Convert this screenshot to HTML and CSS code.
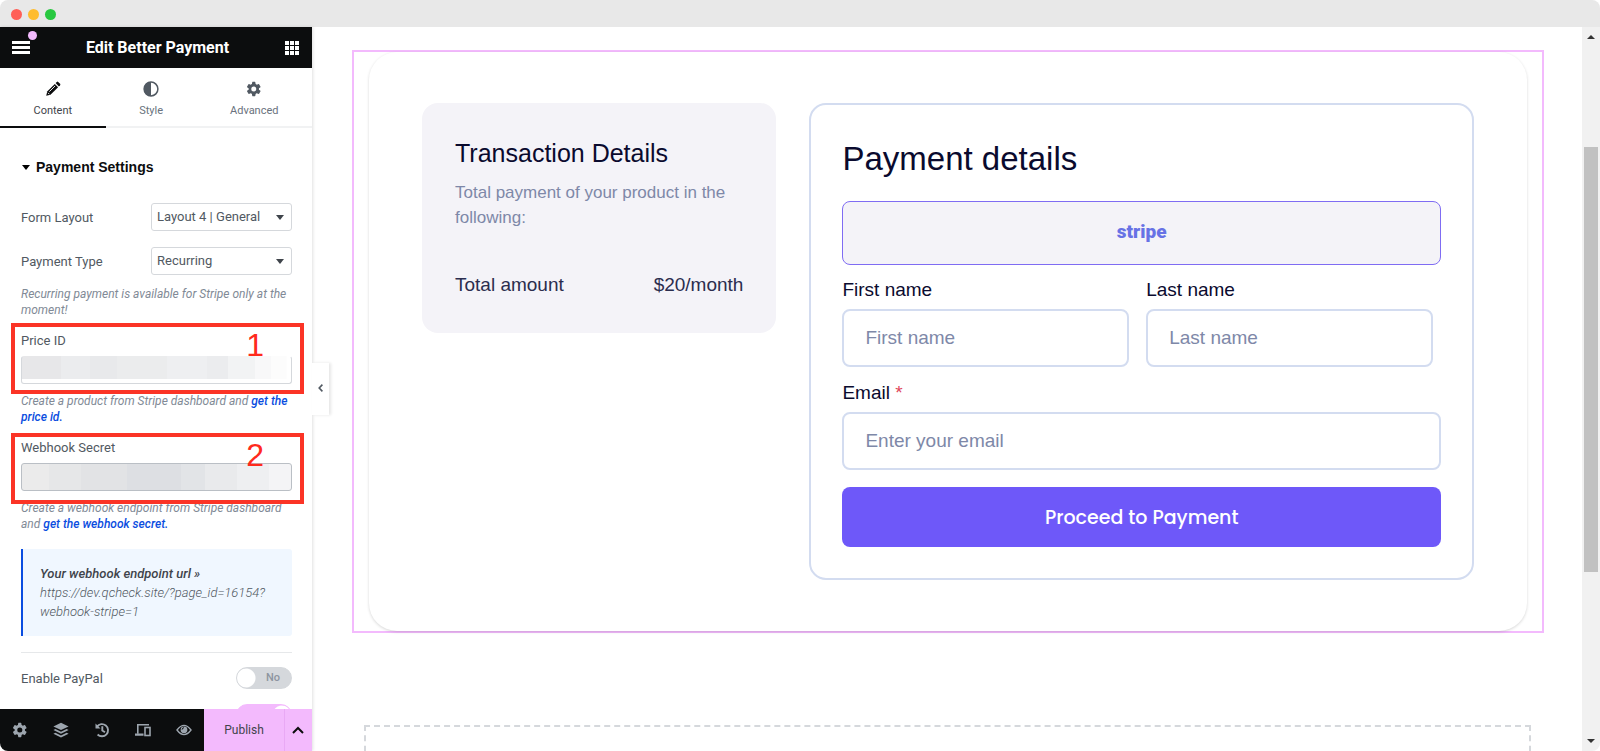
FILE: index.html
```html
<!DOCTYPE html>
<html lang="en">
<head>
    <meta charset="UTF-8">
    <meta name="viewport" content="width=device-width, initial-scale=1.0">
    <title>Edit Better Payment</title>
    <link rel="stylesheet" href="styles.css">
</head>
<body>
    <div class="window">
        <div class="titlebar">
            <span class="dot dot-red"></span>
            <span class="dot dot-yellow"></span>
            <span class="dot dot-green"></span>
        </div>

        <div class="workspace">
            <aside class="sidebar">
                <header class="panel-header">
                    <button class="icon-btn menu-btn" aria-label="Menu">
                        <svg width="18" height="13" viewBox="0 0 18 13" fill="#fff"><path d="M0 0h18v3H0zM0 5h18v3H0zM0 10h18v3H0z"/></svg>
                        <span class="notice-dot"></span>
                    </button>
                    <h1 class="panel-title">Edit Better Payment</h1>
                    <button class="icon-btn" aria-label="Widgets">
                        <svg width="14" height="14" viewBox="0 0 14 14" fill="#fff"><path d="M0 0h4v4H0zM5 0h4v4H5zM10 0h4v4h-4zM0 5h4v4H0zM5 5h4v4H5zM10 5h4v4h-4zM0 10h4v4H0zM5 10h4v4H5zM10 10h4v4h-4z"/></svg>
                    </button>
                </header>

                <nav class="tabs">
                    <button class="tab active">
                        <svg width="16" height="16" viewBox="0 0 16 16"><path d="M1.2 14.8l1-4.3 7.6-7.6 3.3 3.3-7.6 7.6z" fill="#0c0d0e"/><path d="M10.6 2.1l1.2-1.2q.7-.6 1.4 0l1.9 1.9q.6.7 0 1.4l-1.2 1.2z" fill="#0c0d0e"/><path d="M4.3 10.7l5.8-5.8M3 11.8l1.3 1.4" stroke="#fff" stroke-width=".9"/></svg>
                        Content
                    </button>
                    <button class="tab">
                        <svg width="16" height="16" viewBox="0 0 16 16"><circle cx="8" cy="8" r="6.9" fill="#fff" stroke="#515962" stroke-width="1.5"/><path d="M8 1a7 7 0 0 0 0 14z" fill="#515962"/></svg>
                        Style
                    </button>
                    <button class="tab">
                        <svg width="16" height="16" viewBox="0 0 24 24"><path fill="#515962" d="M19.4 13a7.5 7.5 0 0 0 0-2l2.3-1.800a.6.6 0 0 0 .1-.7l-2.2-3.8a.6.6 0 0 0-.7-.2l-2.7 1.1a8 8 0 0 0-1.8-1L14 1.700a.6.6 0 0 0-.6-.5H9.800a.6.6 0 0 0-.5.5l-.4 2.9a8 8 0 0 0-1.8 1L4.400 4.500a.6.6 0 0 0-.7.2L1.500 8.500a.6.6 0 0 0 .1.7L4 11a7.500 7.500 0 0 0 0 2l-2.400 1.800a.6.6 0 0 0-.1.7l2.200 3.800c.1.2.4.3.7.2l2.700-1.100a8 8 0 0 0 1.800 1l.4 2.900c0 .3.3.5.5.5h3.600c.3 0 .5-.2.6-.5l.4-2.900a8 8 0 0 0 1.800-1l2.700 1.100c.3.1.6 0 .7-.2l2.200-3.800a.6.6 0 0 0-.1-.7zM11.700 15.800a3.800 3.800 0 1 1 0-7.600 3.800 3.800 0 0 1 0 7.600z"/></svg>
                        Advanced
                    </button>
                </nav>

                <div class="controls">
                    <h2 class="section-title">
                        <svg width="8" height="5" viewBox="0 0 8 5"><path d="M0 0h8L4 5z"/></svg>
                        Payment Settings
                    </h2>

                    <div class="control-row">
                        <label for="form-layout">Form Layout</label>
                        <div class="select-wrap">
                            <select id="form-layout" class="select">
                                <option>Layout 4 | General</option>
                            </select>
                            <svg class="select-arrow" width="8" height="5" viewBox="0 0 8 5" fill="#3f444b"><path d="M0 0h8L4 5z"/></svg>
                        </div>
                    </div>
                    <div class="control-row">
                        <label for="payment-type">Payment Type</label>
                        <div class="select-wrap">
                            <select id="payment-type" class="select">
                                <option>Recurring</option>
                            </select>
                            <svg class="select-arrow" width="8" height="5" viewBox="0 0 8 5" fill="#3f444b"><path d="M0 0h8L4 5z"/></svg>
                        </div>
                    </div>
                    <p class="description type-note">Recurring payment is available for Stripe only at the moment!</p>

                    <div class="field">
                        <label for="price-id">Price ID</label>
                        <input type="text" id="price-id" class="masked masked-price">
                        <p class="description">Create a product from Stripe dashboard and <a href="#">get the price id.</a></p>
                        <div class="callout callout-price">1</div>
                    </div>

                    <div class="field">
                        <label for="webhook-secret">Webhook Secret</label>
                        <input type="text" id="webhook-secret" class="masked masked-secret">
                        <p class="description">Create a webhook endpoint from Stripe dashboard and <a href="#">get the webhook secret.</a></p>
                        <div class="callout callout-secret">2</div>
                    </div>

                    <div class="endpoint">
                        <strong>Your webhook endpoint url »</strong><br>
                        https://dev.qcheck.site/?page_id=16154?<wbr>webhook-stripe=1
                    </div>

                    <div class="switches">
                        <div class="control-row">
                            <label for="enable-paypal">Enable PayPal</label>
                            <span class="switch">
                                <input type="checkbox" id="enable-paypal">
                                <span class="switch-text">No</span>
                            </span>
                        </div>
                        <div class="control-row">
                            <label for="enable-stripe">Enable Stripe</label>
                            <span class="switch">
                                <input type="checkbox" id="enable-stripe" checked>
                            </span>
                        </div>
                    </div>
                </div>

                <footer class="panel-footer">
                    <button class="tool" aria-label="Settings">
                        <svg width="16" height="16" viewBox="0 0 24 24"><path fill="#9da5ae" d="M19.4 13a7.5 7.5 0 0 0 0-2l2.3-1.800a.6.6 0 0 0 .1-.7l-2.2-3.8a.6.6 0 0 0-.7-.2l-2.7 1.1a8 8 0 0 0-1.8-1L14 1.700a.6.6 0 0 0-.6-.5H9.800a.6.6 0 0 0-.5.5l-.4 2.9a8 8 0 0 0-1.8 1L4.400 4.500a.6.6 0 0 0-.7.2L1.500 8.500a.6.6 0 0 0 .1.7L4 11a7.500 7.500 0 0 0 0 2l-2.400 1.800a.6.6 0 0 0-.1.7l2.200 3.800c.1.2.4.3.7.2l2.700-1.100a8 8 0 0 0 1.800 1l.4 2.900c0 .3.3.5.5.5h3.600c.3 0 .5-.2.6-.5l.4-2.900a8 8 0 0 0 1.800-1l2.700 1.100c.3.1.6 0 .7-.2l2.200-3.800a.6.6 0 0 0-.1-.7zM11.700 15.800a3.800 3.800 0 1 1 0-7.600 3.800 3.800 0 0 1 0 7.600z"/></svg>
                    </button>
                    <button class="tool" aria-label="Navigator">
                        <svg width="16" height="16" viewBox="0 0 16 16" fill="#9da5ae"><path d="M8 .8L15.6 4.400 8 8 .4 4.400z"/><path d="M.4 8l2-1L8 9.700 13.600 7l2 1L8 11.700z"/><path d="M.4 11.700l2-1L8 13.400l5.600-2.700 2 1L8 15.400z"/></svg>
                    </button>
                    <button class="tool" aria-label="History">
                        <svg width="16" height="16" viewBox="0 0 16 16" fill="none" stroke="#9da5ae" stroke-width="1.9"><path d="M3 4.600A6.100 6.100 0 1 1 3.600 12.500"/><path d="M8.300 4.300v4.200l2.700 1.800"/><path d="M1.500 1.500v5h5z" fill="#9da5ae" stroke="none"/></svg>
                    </button>
                    <button class="tool" aria-label="Responsive mode">
                        <svg width="16" height="16" viewBox="0 0 16 16" fill="none" stroke="#9da5ae" stroke-width="1.6"><path d="M14 2.800H2.800v9"/><path d="M0 12.700h8.500" stroke-width="2.2"/><rect x="10" y="5.500" width="5" height="8"/></svg>
                    </button>
                    <button class="tool" aria-label="Preview">
                        <svg width="16" height="16" viewBox="0 0 16 16"><path d="M1 8q7-9.200 14 0-7 9.200-14 0z" fill="none" stroke="#9da5ae" stroke-width="1.4"/><circle cx="8" cy="7.800" r="3.400" fill="#9da5ae"/><path d="M6.100 7.600A2 2 0 0 1 8 5.700" fill="none" stroke="#0c0d0e"/></svg>
                    </button>
                    <button class="publish">Publish</button>
                    <button class="publish-more" aria-label="Save options">
                        <svg width="12" height="8" viewBox="0 0 12 8" fill="none" stroke="#0c0d0e" stroke-width="2"><path d="M1 7l5-5 5 5"/></svg>
                    </button>
                </footer>

                <button class="collapse" aria-label="Hide panel">
                    <svg width="5" height="8" viewBox="0 0 5 8" fill="none" stroke="#515962" stroke-width="1.6"><path d="M4.400.6L1.200 4l3.200 3.400"/></svg>
                </button>
            </aside>

            <main class="canvas">
                <div class="widget">
                    <div class="payment-layout">
                        <section class="transaction">
                            <h2>Transaction Details</h2>
                            <p>Total payment of your product in the following:</p>
                            <div class="total">
                                <span>Total amount</span>
                                <span>$20/month</span>
                            </div>
                        </section>

                        <form class="payment-form">
                            <h2>Payment details</h2>
                            <button type="button" class="gateway">stripe</button>
                            <div class="names">
                                <div class="form-field">
                                    <label for="first-name">First name</label>
                                    <input type="text" id="first-name" placeholder="First name">
                                </div>
                                <div class="form-field">
                                    <label for="last-name">Last name</label>
                                    <input type="text" id="last-name" placeholder="Last name">
                                </div>
                            </div>
                            <div class="form-field">
                                <label for="email">Email <span class="required">*</span></label>
                                <input type="email" id="email" placeholder="Enter your email">
                            </div>
                            <button type="button" class="submit">Proceed to Payment</button>
                        </form>
                    </div>
                </div>
                <div class="drop-area"></div>
            </main>

            <div class="scrollbar">
                <svg width="8" height="4" viewBox="0 0 8 4" fill="#333"><path d="M0 4l4-4 4 4z"/></svg>
                <div class="track"><div class="thumb"></div></div>
                <svg width="8" height="4" viewBox="0 0 8 4" fill="#333"><path d="M0 0h8L4 4z"/></svg>
            </div>
        </div>
    </div>
</body>
</html>
```

FILE: styles.css
```css
* {
    box-sizing: border-box;
}
body {
    margin: 0;
    font-family: Roboto, "Liberation Sans", sans-serif;
    font-size: 13px;
    color: #515962;
    background: #fff;
}
h1, h2, p {
    margin: 0;
}
button, input, select {
    font-family: inherit;
    margin: 0;
}
button {
    border: none;
    background: none;
    padding: 0;
    cursor: pointer;
}
svg {
    display: block;
}
.window {
    display: flex;
    flex-direction: column;
    height: 100vh;
    border-radius: 8px;
    overflow: hidden;
}
.titlebar {
    display: flex;
    align-items: center;
    gap: 6px;
    flex: none;
    height: 27px;
    padding: 1px 11px 0;
    background: #e8e8e8;
}
.dot {
    width: 11px;
    height: 11px;
    border-radius: 50%;
}
.dot-red {
    background: #ff5f57;
}
.dot-yellow {
    background: #febc2e;
}
.dot-green {
    background: #28c840;
}
.workspace {
    display: flex;
    flex: 1;
    min-height: 0;
}

/* Editor panel */
.sidebar {
    position: relative;
    z-index: 1;
    display: flex;
    flex-direction: column;
    flex: none;
    width: 312px;
    box-shadow: 1px 0 3px rgba(0,0,0,0.12);
}
.panel-header {
    display: flex;
    align-items: center;
    justify-content: space-between;
    flex: none;
    height: 41px;
    padding: 0 13px 0 12px;
    background: #0c0d0e;
}
.menu-btn {
    position: relative;
}
.notice-dot {
    position: absolute;
    top: -10px;
    right: -7px;
    width: 9px;
    height: 9px;
    border-radius: 50%;
    background: #f3bafd;
}
.panel-title {
    font-size: 16px;
    font-weight: 700;
    color: #fff;
}
.tabs {
    display: flex;
    flex: none;
    height: 60px;
    border-bottom: 2px solid #f1f2f3;
}
.tab {
    display: flex;
    flex: 1 1 auto;
    flex-direction: column;
    align-items: center;
    gap: 6px;
    margin-bottom: -2px;
    padding-top: 13px;
    font-size: 11px;
    line-height: 16px;
    color: #69727d;
}
.tab.active {
    color: #3f444b;
    border-bottom: 2px solid #0c0d0e;
}
.controls {
    flex: 1;
    min-height: 0;
    overflow: hidden;
    padding: 29px 20px 0 21px;
}
.section-title {
    display: flex;
    align-items: center;
    gap: 6px;
    margin-bottom: 26px;
    padding-left: 1px;
    font-family: "Liberation Sans", Arial, sans-serif;
    font-size: 14px;
    font-weight: 700;
    line-height: 20px;
    color: #0c0d0e;
}
.control-row {
    display: flex;
    align-items: center;
    justify-content: space-between;
}
.control-row + .control-row {
    margin-top: 16px;
}
.select-wrap {
    position: relative;
    width: 141px;
}
.select {
    appearance: none;
    display: block;
    width: 100%;
    height: 28px;
    padding: 0 5px 1px;
    border: 1px solid #d5d8dc;
    border-radius: 3px;
    font-size: 13px;
    color: #515962;
    background: #fff;
}
.select-arrow {
    position: absolute;
    top: 12px;
    right: 8px;
    pointer-events: none;
}
.description {
    font-size: 12px;
    font-style: italic;
    line-height: 16px;
    color: #818a96;
}
.description a {
    font-weight: 500;
    color: #0a4de0;
    text-decoration: none;
}
.type-note {
    margin-top: 11px;
}
.field {
    position: relative;
    margin-top: 15px;
}
.field label {
    display: block;
    line-height: 16px;
}
.masked {
    display: block;
    width: 100%;
    height: 28px;
    margin: 7px 0 9px;
    border: 1px solid #d5d8dc;
    border-radius: 3px;
}
.masked-price {
    border-top-color: transparent;
    background: linear-gradient(90deg, #e7e7e9 0 15%, #ebecee 15% 26%, #e8e9eb 26% 36%, #ebeced 36% 55%, #eeeff1 55% 70%, #ebecee 70% 78%, #f2f3f4 78% 88%, #f8f8f9 88% 94%, #fcfcfc 94%) no-repeat border-box left top / 98% 23px;
}
.masked-secret {
    border-color: #babfc5;
    background: linear-gradient(90deg, #ebebeb 0 10%, #e6e7e8 10% 22%, #e2e3e5 22% 39%, #dddfe3 39% 59%, #e2e4e7 59% 68%, #e9eaec 68% 80%, #eeeff1 80% 92%, #f4f4f6 92%);
}

/* Numbered outlines over the two key fields */
.callout {
    position: absolute;
    left: -10px;
    width: 293px;
    height: 71px;
    border: 4px solid #fb3426;
    padding: 2px 36px 0 0;
    font-family: "Liberation Sans", Arial, sans-serif;
    font-size: 32px;
    line-height: 32px;
    text-align: right;
    color: #ff2a1c;
    pointer-events: none;
}
.callout-price {
    top: -10px;
}
.callout-secret {
    top: -7px;
}
.endpoint {
    margin-top: 17px;
    padding: 15px 16px 15px 17px;
    border-left: 2px solid #0a4de0;
    border-radius: 0 3px 3px 0;
    background: #f0f7ff;
    font-style: italic;
    font-weight: 300;
    line-height: 19px;
    color: #515962;
}
.endpoint strong {
    font-weight: 500;
    color: #3f444b;
}
.switches {
    margin-top: 16px;
    padding-top: 14px;
    border-top: 1px solid #e6e8ea;
}
.switches .control-row + .control-row {
    margin-top: 15px;
}
.switch {
    position: relative;
}
.switch input {
    appearance: none;
    display: block;
    width: 56px;
    height: 22px;
    margin: 0;
    border: 1px solid #d5d8dc;
    border-radius: 11px;
    background: radial-gradient(circle at 9px 10px, #fff 9px, #d5d8dc 10px);
}
.switch input:checked {
    border-color: #f3bafd;
    background: radial-gradient(circle at 45px 10px, #fff 9px, #f3bafd 10px);
}
.switch-text {
    position: absolute;
    top: 0;
    right: 12px;
    font-size: 11px;
    font-weight: 500;
    line-height: 22px;
    color: #8d95a0;
    pointer-events: none;
}
.panel-footer {
    display: flex;
    flex: none;
    height: 42px;
    background: #0c0d0e;
}
.tool {
    display: flex;
    align-items: center;
    justify-content: center;
    flex: 1;
}
.publish {
    width: 80px;
    background: #f3bafd;
    font-size: 12px;
    color: #3f444b;
}
.publish-more {
    display: flex;
    align-items: center;
    justify-content: center;
    width: 28px;
    border-left: 1px solid #e9a9f5;
    background: #f3bafd;
}
.collapse {
    position: absolute;
    top: 336px;
    left: 312px;
    display: flex;
    align-items: center;
    justify-content: center;
    width: 17px;
    height: 52px;
    padding-bottom: 2px;
    background: #fff;
    box-shadow: 2px 0 3px rgba(0,0,0,0.1);
}

/* Page preview */
.canvas {
    flex: 1;
    overflow: hidden;
    padding: 23px 38px 0 40px;
    font-family: "Liberation Sans", Arial, sans-serif;
    font-size: 19px;
    color: #0a0a2e;
}
.widget {
    padding: 0 15px;
    border: 2px solid #f3bafd;
}
.payment-layout {
    display: grid;
    grid-template-columns: 8fr 15fr;
    align-items: start;
    gap: 33px;
    padding: 51px 53px;
    border-radius: 28px;
    box-shadow: 0 1px 3px rgba(0,0,0,0.16);
}
.transaction {
    padding: 33px 33px 35px;
    border-radius: 16px;
    background: #f4f3f8;
}
.transaction h2 {
    font-size: 25px;
    font-weight: 400;
    line-height: 34px;
}
.transaction p {
    margin-top: 10px;
    font-size: 17px;
    line-height: 25px;
    color: #7e88a8;
}
.total {
    display: flex;
    justify-content: space-between;
    margin-top: 42px;
    line-height: 26px;
    color: #2b2d4e;
}
.payment-form {
    padding: 31px;
    border: 2px solid #d3dcf0;
    border-radius: 17px;
}
.payment-form h2 {
    font-size: 33px;
    font-weight: 400;
    line-height: 46px;
}
.gateway {
    display: block;
    width: 100%;
    height: 64px;
    margin: 19px 0 12px;
    padding-bottom: 4px;
    border: 1px solid #7f6cf3;
    border-radius: 8px;
    background: #f4f3f8;
    font-family: Roboto, sans-serif;
    font-size: 19px;
    font-weight: 900;
    color: #6772e5;
}
.names {
    display: grid;
    grid-template-columns: 1fr 1fr;
    gap: 17px;
    margin-bottom: 13px;
    padding-right: 8px;
}
.form-field label {
    display: block;
    margin-bottom: 6px;
    line-height: 26px;
}
.form-field input {
    display: block;
    width: 100%;
    height: 58px;
    padding: 0 21px;
    border: 2px solid #d3dcf0;
    border-radius: 8px;
    font-size: 19px;
}
.form-field input::placeholder {
    color: #7e88a8;
}
.required {
    color: #e0455a;
}
.submit {
    display: block;
    width: 100%;
    height: 60px;
    margin-top: 17px;
    border-radius: 8px;
    background: #6e58f9;
    font-family: Poppins, Inter, sans-serif;
    font-size: 19px;
    font-weight: 500;
    color: #fff;
}
.drop-area {
    height: 120px;
    margin: 92px 13px 0 12px;
    border: 2px dashed #d5d8dc;
}

/* Scroll track on the right edge */
.scrollbar {
    display: flex;
    flex-direction: column;
    align-items: center;
    width: 18px;
    padding: 8px 0;
    background: #f1f1f1;
}
.track {
    flex: 1;
    width: 14px;
    padding-top: 108px;
}
.thumb {
    height: 425px;
    background: #c1c1c1;
}
```
